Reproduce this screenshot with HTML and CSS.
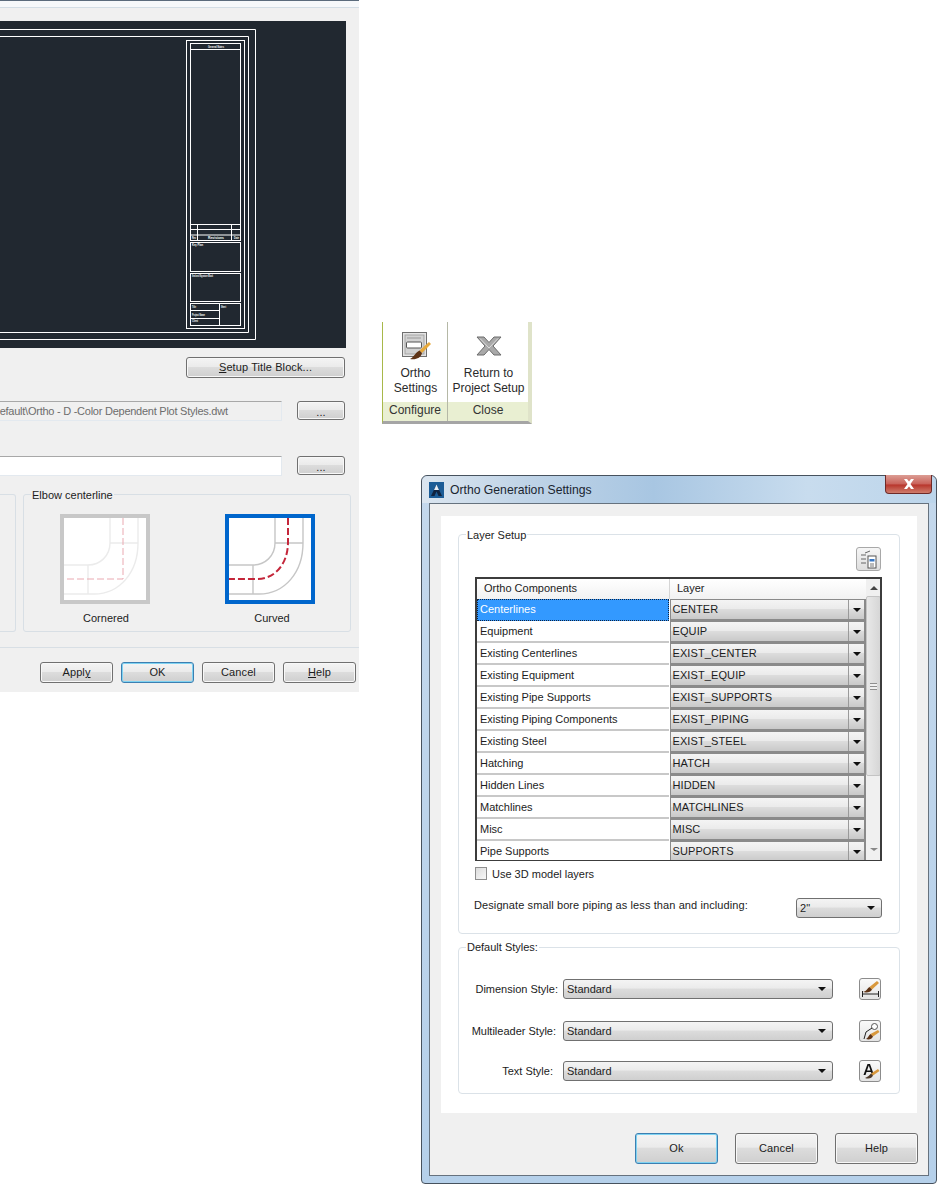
FILE: index.html
```html
<!DOCTYPE html>
<html lang="en">
<head>
    <meta charset="UTF-8">
    <title>Ortho Generation Settings</title>
    <link rel="stylesheet" href="styles.css">
</head>
<body>

    <!-- Cropped page setup dialog -->
    <div class="setup-dialog">
        <div class="top-strip"></div>
        <div class="preview">
            <svg class="sheet" width="346" height="327" viewBox="0 0 346 327">
                <g fill="none" stroke="#fff" stroke-width="1">
                    <path d="M-2 8.5H255.5V318.5H-2"/>
                    <path d="M-2 15.5H248.5V311.5H-2"/>
                    <rect x="186.5" y="19.5" width="58" height="288"/>
                    <rect x="190.5" y="22.5" width="50" height="181"/>
                    <path d="M190.5 28.5H240.5"/>
                    <path d="M190.5 208.5H240.5M190.5 214H240.5M197.5 203.5V219.5M231.5 203.5V219.5"/>
                    <rect x="190.5" y="203.5" width="50" height="16"/>
                    <rect x="190.5" y="221.5" width="50" height="29"/>
                    <rect x="190.5" y="252.5" width="50" height="28"/>
                    <rect x="190.5" y="282.5" width="50" height="22"/>
                    <path d="M219.5 282.5V304.5M190.5 289.5H219.5M190.5 297.5H219.5"/>
                </g>
                <g class="sheet-text">
                    <text x="208" y="27" textLength="16" lengthAdjust="spacingAndGlyphs">General Notes</text>
                    <text x="192" y="218" textLength="4" lengthAdjust="spacingAndGlyphs">Rev</text>
                    <text x="208" y="218" textLength="16" lengthAdjust="spacingAndGlyphs">Revisions</text>
                    <text x="234" y="218" textLength="5" lengthAdjust="spacingAndGlyphs">Date</text>
                    <text x="192" y="225" textLength="11" lengthAdjust="spacingAndGlyphs">Key Plan</text>
                    <text x="192" y="256" textLength="21" lengthAdjust="spacingAndGlyphs">Seal and Signature Block</text>
                    <text x="192" y="287" textLength="4" lengthAdjust="spacingAndGlyphs">Title</text>
                    <text x="221" y="287" textLength="5" lengthAdjust="spacingAndGlyphs">Sheet</text>
                    <text x="192" y="294.500" textLength="13" lengthAdjust="spacingAndGlyphs">Project Name</text>
                    <text x="192" y="301" textLength="6" lengthAdjust="spacingAndGlyphs">Client</text>
                </g>
            </svg>
        </div>
        <div class="setup-row">
            <button class="btn btn-title"><u>S</u>etup Title Block...</button>
        </div>
        <div class="path-row">
            <div class="path-field path-readonly"><span>Default\Ortho - D -Color Dependent Plot Styles.dwt</span></div>
            <button class="btn btn-dots">...</button>
        </div>
        <div class="path-row path-row-2">
            <div class="path-field"></div>
            <button class="btn btn-dots">...</button>
        </div>
        <div class="group-row">
            <div class="group-stub"></div>
            <div class="elbow-group">
                <span class="legend">Elbow centerline</span>
                <div class="elbow-option">
                    <div class="elbow-pic">
                        <svg width="82" height="82" viewBox="0 0 82 82">
                            <g fill="none" stroke="#ebebeb" stroke-width="1.4">
                                <path d="M46 0V25C46 38 36 47 24 47H0M74 0V25C74 54 56 76 30 76H0M46 25H74M24 47V76"/>
                            </g>
                            <path d="M59 0V61H2" fill="none" stroke="#eaa9b1" stroke-width="1" stroke-dasharray="7 3"/>
                        </svg>
                    </div>
                    <span>Cornered</span>
                </div>
                <div class="elbow-option">
                    <div class="elbow-pic elbow-selected">
                        <svg width="82" height="82" viewBox="0 0 82 82">
                            <g fill="none" stroke="#c6c6c6" stroke-width="1.4">
                                <path d="M46 0V25C46 38 36 47 24 47H0M74 0V25C74 54 56 76 30 76H0M46 25H74M24 47V76"/>
                            </g>
                            <path d="M59 0V24C59 46 46 61 28 61H0" fill="none" stroke="#c4263a" stroke-width="2" stroke-dasharray="7 3"/>
                        </svg>
                    </div>
                    <span>Curved</span>
                </div>
            </div>
        </div>
        <div class="divider"></div>
        <div class="setup-buttons">
            <button class="btn btn-foot">Appl<u>y</u></button>
            <button class="btn btn-foot btn-default">OK</button>
            <button class="btn btn-foot">Cancel</button>
            <button class="btn btn-foot"><u>H</u>elp</button>
        </div>
    </div>

    <!-- Ribbon panels -->
    <div class="ribbon">
        <div class="panel panel-configure">
            <div class="panel-body">
                <svg class="ribbon-icon" width="30" height="30" viewBox="0 0 30 30">
                    <rect x="1.500" y="2.500" width="24" height="24" fill="#e4e4e4" stroke="#6f6f6f"/>
                    <rect x="4" y="5" width="19" height="19" fill="#d2d2d2" stroke="#a5a5a5"/>
                    <rect x="5.500" y="12" width="15" height="6" rx="1" fill="#fff" stroke="#555"/>
                    <path d="M6 8H20" stroke="#9a9a9a"/>
                    <path d="M28 12L30 14L21 23L18.500 20.500Z" fill="#e7a93c"/>
                    <path d="M18.500 20.500L21 23C20 28 15 30 9 29C13 27 14 23 18.500 20.500Z" fill="#5f3416"/>
                </svg>
                <span>Ortho<br>Settings</span>
            </div>
            <div class="panel-foot">Configure</div>
        </div>
        <div class="panel panel-close">
            <div class="panel-body">
                <svg class="ribbon-icon" width="30" height="30" viewBox="0 0 30 30">
                    <path d="M3 7H10L15 12.500L20 7H27L19 16L27 25H20L15 19.500L10 25H3L11 16Z" fill="#a9a9a9" stroke="#6c6c6c"/>
                    <path d="M6 8.500L15 18L24 8.500" fill="none" stroke="#dcdcdc"/>
                </svg>
                <span>Return to<br>Project Setup</span>
            </div>
            <div class="panel-foot">Close</div>
        </div>
    </div>

    <!-- Ortho Generation Settings window -->
    <div class="window">
        <div class="titlebar">
            <svg class="app-icon" width="15" height="16" viewBox="0 0 15 16">
                <rect width="15" height="16" fill="#1c5c96"/>
                <path d="M7.500 2.500L13 14H9.500L7.500 9.500L5.500 14H2Z" fill="#10233f"/>
                <path d="M7.500 2.500L10 8H5Z" fill="#e7eef6"/>
            </svg>
            <span class="title-text">Ortho Generation Settings</span>
            <div class="close-btn">
                <svg width="12" height="10" viewBox="0 0 12 10"><path d="M1 0H4L6 2.500L8 0H11L7.500 5L11 10H8L6 7.500L4 10H1L4.500 5Z" fill="#fff"/></svg>
            </div>
        </div>
        <div class="client">
            <div class="panel-white">
                <div class="group layer-group">
                    <span class="legend">Layer Setup</span>
                    <div class="group-tools">
                        <div class="tool-btn tool-large">
                            <svg width="19" height="19" viewBox="0 0 19 19">
                                <path d="M2 5H7M2 9H7M2 13H7M6 3L11 1" stroke="#666" fill="none"/>
                                <rect x="9" y="6" width="8" height="12" fill="#fff" stroke="#555"/>
                                <rect x="10.500" y="9" width="5" height="2.500" fill="#3a78c4"/>
                                <path d="M11 14H15M11 16H15" stroke="#777"/>
                            </svg>
                        </div>
                    </div>
                    <div class="grid-box">
                        <div class="grid-main">
                            <div class="grid-head">
                                <div class="head-name">Ortho Components</div>
                                <div class="head-layer">Layer</div>
                            </div>
                            <div class="grid-rows">
                                <div class="row row-selected"><div class="cell-name">Centerlines</div><div class="cell-combo"><span>CENTER</span><i class="arrow-box"><b class="arrow"></b></i></div></div>
                                <div class="row"><div class="cell-name">Equipment</div><div class="cell-combo"><span>EQUIP</span><i class="arrow-box"><b class="arrow"></b></i></div></div>
                                <div class="row"><div class="cell-name">Existing Centerlines</div><div class="cell-combo"><span>EXIST_CENTER</span><i class="arrow-box"><b class="arrow"></b></i></div></div>
                                <div class="row"><div class="cell-name">Existing Equipment</div><div class="cell-combo"><span>EXIST_EQUIP</span><i class="arrow-box"><b class="arrow"></b></i></div></div>
                                <div class="row"><div class="cell-name">Existing Pipe Supports</div><div class="cell-combo"><span>EXIST_SUPPORTS</span><i class="arrow-box"><b class="arrow"></b></i></div></div>
                                <div class="row"><div class="cell-name">Existing Piping Components</div><div class="cell-combo"><span>EXIST_PIPING</span><i class="arrow-box"><b class="arrow"></b></i></div></div>
                                <div class="row"><div class="cell-name">Existing Steel</div><div class="cell-combo"><span>EXIST_STEEL</span><i class="arrow-box"><b class="arrow"></b></i></div></div>
                                <div class="row"><div class="cell-name">Hatching</div><div class="cell-combo"><span>HATCH</span><i class="arrow-box"><b class="arrow"></b></i></div></div>
                                <div class="row"><div class="cell-name">Hidden Lines</div><div class="cell-combo"><span>HIDDEN</span><i class="arrow-box"><b class="arrow"></b></i></div></div>
                                <div class="row"><div class="cell-name">Matchlines</div><div class="cell-combo"><span>MATCHLINES</span><i class="arrow-box"><b class="arrow"></b></i></div></div>
                                <div class="row"><div class="cell-name">Misc</div><div class="cell-combo"><span>MISC</span><i class="arrow-box"><b class="arrow"></b></i></div></div>
                                <div class="row"><div class="cell-name">Pipe Supports</div><div class="cell-combo"><span>SUPPORTS</span><i class="arrow-box"><b class="arrow"></b></i></div></div>
                            </div>
                        </div>
                        <div class="scrollbar">
                            <b class="scroll-up"></b>
                            <div class="scroll-thumb"><span class="grip"></span></div>
                            <b class="scroll-down"></b>
                        </div>
                    </div>
                    <label class="check-row"><span class="check"></span>Use 3D model layers</label>
                    <div class="bore-row">
                        <span>Designate small bore piping as less than and including:</span>
                        <div class="select select-bore"><span>2"</span><b class="arrow"></b></div>
                    </div>
                </div>
                <div class="group style-group">
                    <span class="legend">Default Styles:</span>
                    <div class="style-row">
                        <span class="style-label">Dimension Style:</span>
                        <div class="select select-style"><span>Standard</span><b class="arrow"></b></div>
                        <div class="tool-btn">
                            <svg width="19" height="19" viewBox="0 0 19 19">
                                <path d="M1.500 11V17M17.500 11V17M1.500 14H17.500" stroke="#222" fill="none"/>
                                <path d="M16 1L18 3L11 9.500L8.500 7Z" fill="#d9983c"/>
                                <path d="M8.500 7L11 9.500C10 12 6 13 2 12C6 11 6.500 8 8.500 7Z" fill="#5f3416"/>
                            </svg>
                        </div>
                    </div>
                    <div class="style-row style-row-leader">
                        <span class="style-label">Multileader Style:</span>
                        <div class="select select-style"><span>Standard</span><b class="arrow"></b></div>
                        <div class="tool-btn">
                            <svg width="19" height="19" viewBox="0 0 19 19">
                                <circle cx="13.500" cy="4.500" r="3" fill="#fff" stroke="#555"/>
                                <path d="M11 6L5 10L3 17" fill="none" stroke="#222"/>
                                <path d="M17 8L18.500 10L12 14.500L9.500 12Z" fill="#d9983c"/>
                                <path d="M9.500 12L12 14.500C11 17 8 18 5 17C7 16 8 13 9.500 12Z" fill="#5f3416"/>
                            </svg>
                        </div>
                    </div>
                    <div class="style-row style-row-text">
                        <span class="style-label">Text Style:</span>
                        <div class="select select-style"><span>Standard</span><b class="arrow"></b></div>
                        <div class="tool-btn">
                            <svg width="19" height="19" viewBox="0 0 19 19">
                                <path d="M6.500 2H9L13 13H11L10 10H5.500L4.500 13H2.500ZM6 8.500H9.500L7.800 3.500Z" fill="#111"/>
                                <path d="M17 7L18.500 9L12 13.500L10 11.500Z" fill="#d9983c"/>
                                <path d="M10 11.500L12 13.500C11 16 8 17.500 4 16C7 15 8.500 13 10 11.500Z" fill="#4e3a2a"/>
                            </svg>
                        </div>
                    </div>
                </div>
            </div>
            <div class="window-buttons">
                <button class="btn btn-win btn-default">Ok</button>
                <button class="btn btn-win">Cancel</button>
                <button class="btn btn-win">Help</button>
            </div>
        </div>
    </div>

</body>
</html>
```

FILE: styles.css
```css
body {
    margin: 0;
    background-color: #fff;
    font-family: "Liberation Sans", Arial, sans-serif;
    font-size: 11px;
    color: #1c1c1c;
    height: 1184px;
    width: 950px;
    overflow: hidden;
    position: relative;
}

/* Buttons */
.btn {
    display: block;
    padding: 0 0 1px;
    font-family: inherit;
    font-size: 11px;
    letter-spacing: 0.1px;
    color: #1c1c1c;
    border: 1px solid #707070;
    border-radius: 3px;
    background: linear-gradient(#f4f4f4 0%, #ebebeb 45%, #dcdcdc 50%, #cfcfcf 100%);
    box-shadow: inset 0 0 0 1px #f8f8f8;
}

.btn-default {
    border-color: #3c7fb1;
    box-shadow: inset 0 0 0 1px #7fd3f2;
}

/* Setup dialog (left) */
.setup-dialog {
    position: absolute;
    left: 0;
    top: 0;
    width: 359px;
    height: 692px;
    background-color: #f0f0f0;
    overflow: hidden;
}

.top-strip {
    height: 6px;
    background-color: #f6f8fa;
    border-top: 1px solid #5b6b7c;
    border-bottom: 1px solid #d3dde5;
}

.preview {
    margin-top: 13px;
    width: 346px;
    height: 327px;
    background-color: #212830;
}

.sheet {
    display: block;
}

.sheet-text text {
    fill: #fff;
    font-size: 4px;
    font-weight: bold;
    font-family: "Liberation Sans", Arial, sans-serif;
}

.setup-row {
    margin-top: 9px;
    padding-left: 186px;
}

.btn-title {
    width: 159px;
    height: 21px;
}

.path-row {
    display: flex;
    align-items: flex-start;
    margin-top: 23px;
    gap: 15px;
}

.path-row-2 {
    margin-top: 35px;
}

.path-field {
    box-sizing: border-box;
    width: 282px;
    height: 20px;
    background-color: #fff;
    border: 1px solid #a8a8a8;
    border-left: none;
    border-bottom-color: #e3e9ef;
    border-right-color: #e3e9ef;
    overflow: hidden;
    white-space: nowrap;
}

.path-readonly {
    background-color: #f0f0f0;
    color: #6d6d6d;
    line-height: 19px;
}

.path-readonly span {
    margin-left: -8px;
    letter-spacing: -0.25px;
}

.btn-dots {
    width: 48px;
    height: 19px;
    line-height: 20px;
}

.group-row {
    display: flex;
    margin-top: 18px;
    gap: 7px;
}

.group-stub {
    width: 16px;
    height: 138px;
    box-sizing: border-box;
    border: 1px solid #d8dfe5;
    border-left: none;
    border-radius: 0 3px 3px 0;
}

.elbow-group {
    position: relative;
    box-sizing: border-box;
    width: 328px;
    height: 138px;
    padding: 19px 35px 0 36px;
    display: flex;
    justify-content: space-between;
    border: 1px solid #d8dfe5;
    border-radius: 3px;
}

.legend {
    position: absolute;
    top: -6px;
    left: 7px;
    padding: 0 1px;
    white-space: nowrap;
}

.elbow-group .legend {
    background-color: #f0f0f0;
}

.elbow-option {
    display: flex;
    flex-direction: column;
    align-items: center;
    gap: 8px;
}

.elbow-option span {
    padding-left: 2px;
}

.elbow-option:last-child span {
    padding-left: 4px;
}

.elbow-pic {
    width: 82px;
    height: 82px;
    background-color: #fff;
    border: 4px solid #c8c8c8;
}

.elbow-pic svg {
    display: block;
}

.elbow-selected {
    border-color: #0066cc;
}

.divider {
    margin-top: 15px;
    height: 1px;
    background-color: #d8dfe5;
}

.setup-buttons {
    display: flex;
    justify-content: flex-end;
    gap: 8px;
    margin-top: 14px;
    padding-right: 3px;
}

.btn-foot {
    width: 73px;
    height: 21px;
}

/* Ribbon */
.ribbon {
    position: absolute;
    left: 382px;
    top: 322px;
    width: 150px;
    height: 102px;
    box-sizing: border-box;
    display: flex;
    background-color: #fff;
    border-left: 1px solid #a8b84a;
    border-right: 4px solid #dfe3c9;
    border-bottom: 3px solid #a5a5a5;
    font-size: 12px;
}

.panel {
    display: flex;
    flex-direction: column;
    height: 99px;
}

.panel-configure {
    width: 64px;
    border-right: 1px solid #b5b8a6;
}

.panel-close {
    width: 80px;
}

.panel-body {
    flex: 1;
    text-align: center;
    line-height: 15px;
    color: #2a2a2a;
    padding-left: 1px;
}

.ribbon-icon {
    display: block;
    margin: 8px auto 6px;
}

.panel-foot {
    height: 19px;
    line-height: 17px;
    text-align: center;
    background-color: #e9efd2;
    color: #333;
}

/* Ortho Generation Settings window */
.window {
    position: absolute;
    left: 421px;
    top: 475px;
    width: 516px;
    height: 709px;
    box-sizing: border-box;
    padding: 0 7px 7px;
    border: 1px solid #47525e;
    border-radius: 6px 6px 4px 4px;
    background: linear-gradient(#c4d8ec 0%, #b5d0ea 100%);
}

.titlebar {
    display: flex;
    align-items: center;
    height: 27px;
    margin: 0 -7px;
    padding: 0 7px;
    position: relative;
    border-radius: 6px 6px 0 0;
    background: linear-gradient(90deg, #dbe5ef 0%, #c0d4e7 20%, #a8c6e2 45%, #c8dcee 75%, #bcd5eb 100%);
}

.app-icon {
    display: block;
    margin-right: 6px;
}

.title-text {
    font-size: 12.200px;
    color: #1a2530;
}

.close-btn {
    position: absolute;
    right: 4px;
    top: -1px;
    width: 47px;
    height: 19px;
    display: flex;
    align-items: center;
    justify-content: center;
    box-sizing: border-box;
    border: 1px solid #6e2a28;
    border-top: none;
    border-radius: 0 0 4px 4px;
    background: linear-gradient(#dc9d94 0%, #c9625a 50%, #b8362c 55%, #cf7d6d 100%);
}

.client {
    box-sizing: border-box;
    height: 673px;
    padding: 12px 11px 0 11px;
    background-color: #f0f0f0;
    border: 1px solid #66727e;
}

.panel-white {
    box-sizing: border-box;
    height: 597px;
    padding: 18px 17px 0;
    background-color: #fff;
}

.group {
    position: relative;
    box-sizing: border-box;
    border: 1px solid #dbe2e8;
    border-radius: 4px;
}

.group .legend {
    background-color: #fff;
}

.style-group .legend {
    top: -7px;
}

.layer-group {
    height: 400px;
    padding: 12px 16px 0;
}

.group-tools {
    display: flex;
    justify-content: flex-end;
    padding-right: 2px;
}

.tool-btn {
    box-sizing: border-box;
    width: 22px;
    height: 22px;
    display: flex;
    align-items: center;
    justify-content: center;
    background: linear-gradient(#fafafa, #e4e4e4);
    border: 1px solid #8c8c8c;
    border-radius: 3px;
}

.tool-large {
    width: 25px;
    height: 24px;
    background: linear-gradient(#f6f6f6, #dedede);
    border-color: #a8a8a8;
}

.grid-box {
    display: flex;
    box-sizing: border-box;
    width: 407px;
    height: 284px;
    margin-top: 6px;
    border: 2px solid #3c3c3c;
    border-bottom-width: 1px;
    overflow: hidden;
}

.grid-main {
    width: 389px;
}

.grid-head {
    display: flex;
    height: 20px;
    line-height: 19px;
    background: linear-gradient(#fff, #f2f2f2);
}

.head-name {
    box-sizing: border-box;
    width: 193px;
    padding-left: 7px;
    border-right: 1px solid #d5d5d5;
}

.head-layer {
    padding-left: 7px;
}

.grid-rows {
    height: 262px;
    overflow: hidden;
}

.row {
    display: flex;
    height: 22px;
}

.cell-name {
    box-sizing: border-box;
    width: 192px;
    padding-left: 3px;
    line-height: 20px;
    background-color: #fff;
    border-bottom: 2px solid #c8c8c8;
    white-space: nowrap;
}

.row-selected .cell-name {
    background-color: #3399ff;
    color: #fff;
    border: 1px dotted #10233f;
    padding-left: 2px;
    line-height: 18px;
}

.cell-combo {
    box-sizing: border-box;
    width: 197px;
    display: flex;
    align-items: center;
    border: 2px solid #8a8a8a;
    border-top-width: 1px;
    border-left-width: 1px;
    margin-left: 1px;
    padding-left: 2px;
    background: linear-gradient(#f4f4f4 0%, #ebebeb 45%, #dcdcdc 50%, #c9c9c9 100%);
}

.cell-combo span {
    flex: 1;
    margin-top: -1px;
    letter-spacing: 0.1px;
}

.arrow-box {
    box-sizing: border-box;
    width: 16px;
    height: 100%;
    display: flex;
    align-items: center;
    justify-content: center;
    border-left: 1px solid #9a9a9a;
}

.arrow {
    display: block;
    width: 0;
    height: 0;
    border-left: 4px solid transparent;
    border-right: 4px solid transparent;
    border-top: 4px solid #111;
}

.scrollbar {
    flex: 1;
    display: flex;
    flex-direction: column;
    align-items: center;
    background-color: #f0f0f0;
}

.scroll-up,
.scroll-down {
    display: block;
    width: 0;
    height: 0;
    border-left: 4px solid transparent;
    border-right: 4px solid transparent;
}

.scroll-up {
    margin: 7px 0 6px;
    border-bottom: 4px solid #444;
}

.scroll-thumb {
    box-sizing: border-box;
    width: 15px;
    height: 180px;
    display: flex;
    align-items: center;
    justify-content: center;
    background: linear-gradient(90deg, #e8e8e8, #d6d6d6);
    border: 1px solid #c4c4c4;
    border-radius: 2px;
}

.grip {
    width: 7px;
    height: 5px;
    border-top: 1px solid #8f8f8f;
    border-bottom: 1px solid #8f8f8f;
    background: linear-gradient(#f0f0f0 40%, #8f8f8f 40%, #8f8f8f 60%, #f0f0f0 60%);
}

.scroll-down {
    margin-top: 72px;
    border-top: 3px solid #888;
}

.check-row {
    display: flex;
    align-items: center;
    gap: 5px;
    margin-top: 6px;
    height: 13px;
}

.check {
    box-sizing: border-box;
    width: 12px;
    height: 13px;
    border: 1px solid #8e8e8e;
    background: linear-gradient(135deg, #dcdcdc, #f8f8f8);
}

.bore-row {
    display: flex;
    align-items: center;
    justify-content: space-between;
    margin-top: 18px;
    height: 20px;
    letter-spacing: 0.1px;
}

.bore-row > span {
    margin: -6px 0 0 -1px;
}

.select {
    box-sizing: border-box;
    height: 20px;
    display: flex;
    align-items: center;
    justify-content: space-between;
    padding: 0 6px 0 3px;
    border: 1px solid #707070;
    border-radius: 3px;
    background: linear-gradient(#f4f4f4 0%, #ebebeb 45%, #dcdcdc 50%, #cfcfcf 100%);
}

.select-bore {
    width: 86px;
    margin-right: 1px;
}

.select-style {
    width: 270px;
}

.style-group {
    height: 147px;
    margin-top: 13px;
    padding-top: 30px;
}

.style-row {
    display: flex;
    align-items: center;
    height: 22px;
    padding-left: 15px;
}

.style-row-leader {
    margin-top: 20px;
    padding-left: 11px;
}

.style-row-text {
    margin-top: 18px;
}

.style-label {
    box-sizing: border-box;
    width: 89px;
    text-align: right;
    padding-right: 5px;
    white-space: nowrap;
}

.style-row-leader .style-label {
    width: 93px;
    padding-right: 7px;
}

.style-row-text .style-label {
    padding-right: 10px;
}

.style-row .tool-btn {
    margin-left: 26px;
}

.window-buttons {
    display: flex;
    justify-content: flex-end;
    gap: 17px;
    margin-top: 20px;
    margin-right: -1px;
}

.btn-win {
    width: 83px;
    height: 31px;
}
```
